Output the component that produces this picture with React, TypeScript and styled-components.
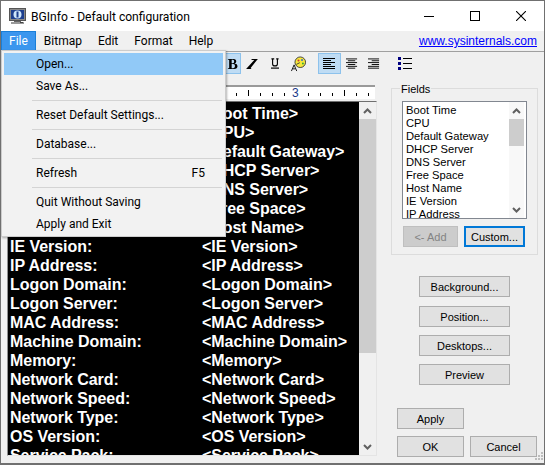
import React from "react";
import styled, { createGlobalStyle } from "styled-components";

const GlobalStyle = createGlobalStyle`
  html, body {
    margin: 0;
    padding: 0;
    background: #f0f0f0;
    overflow: hidden;
  }
`;

const Window = styled.div`
  position: relative;
  box-sizing: border-box;
  width: 545px;
  height: 465px;
  border: 1px solid #707070;
  border-bottom-width: 2px;
  background: #f0f0f0;
  display: flex;
  flex-direction: column;
  overflow: hidden;
  font-family: Roboto, "Noto Sans", sans-serif;
  color: #000;
`;

const TitleBar = styled.div`
  height: 30px;
  flex: none;
  background: #fff;
  display: flex;
  align-items: center;
  padding-left: 8px;
`;

const AppTitle = styled.span`
  margin-left: 5px;
  padding-top: 1px;
  font-size: 12.1px;
  white-space: nowrap;
`;

const WindowControls = styled.div`
  margin-left: auto;
  display: flex;
  height: 30px;
`;

const ControlButton = styled.div`
  width: 46px;
  height: 30px;
  display: flex;
  align-items: center;
  justify-content: center;
`;

const MenuBar = styled.div`
  box-sizing: border-box;
  height: 21px;
  flex: none;
  display: flex;
  align-items: stretch;
  border-bottom: 1px solid #a0a0a0;
  font-size: 12px;
`;

const MenuTitle = styled.div<{ $open?: boolean }>`
  box-sizing: border-box;
  padding: 0 7px 1px;
  display: flex;
  align-items: center;
  color: ${({ $open }) => ($open ? "#fff" : "#000")};
  background: ${({ $open }) => ($open ? "#3b96ee" : "transparent")};
  border: ${({ $open }) => ($open ? "1px solid #1a7fd8" : "1px solid transparent")};
`;

const HomeLink = styled.a`
  margin-left: auto;
  margin-right: 7px;
  align-self: center;
  font-family: "Liberation Sans", sans-serif;
  font-size: 12px;
  color: #0000ff;
  text-decoration: underline;
`;

const Toolbar = styled.div`
  height: 21px;
  margin-top: 1px;
  flex: none;
  display: flex;
  align-items: center;
  padding-left: 219px;
`;

const ToolButton = styled.div<{ $active?: boolean; $width: number; $gap?: number }>`
  box-sizing: border-box;
  width: ${({ $width }) => $width}px;
  height: 21px;
  flex: none;
  margin-left: ${({ $gap }) => $gap ?? 0}px;
  display: flex;
  align-items: center;
  justify-content: center;
  background: ${({ $active }) => ($active ? "#bfdcf4" : "transparent")};
  border: 1px solid ${({ $active }) => ($active ? "#8dc2ec" : "transparent")};
`;

const Body = styled.div`
  flex: 1;
  min-height: 0;
  display: flex;
`;

const EditorColumn = styled.div`
  width: 376px;
  flex: none;
  display: flex;
  flex-direction: column;
`;

const Ruler = styled.div`
  position: relative;
  box-sizing: border-box;
  height: 14px;
  margin: 11px 0 2px 6px;
  width: 368px;
  flex: none;
  background: #fff;
  border-top: 2px solid #9a9a9a;
`;

const RulerNumber = styled.span`
  position: absolute;
  top: -1px;
  font-family: "Liberation Sans", sans-serif;
  font-size: 12px;
  line-height: 14px;
  color: #1a3a8a;
`;

const Editor = styled.div`
  flex: 1;
  min-height: 0;
  margin: 0 0 7px 6px;
  display: flex;
  border-top: 1px solid #6f6f6f;
  border-left: 1px solid #8f8f8f;
  border-right: 1px solid #e4e4e4;
  border-bottom: 1px solid #e4e4e4;
  overflow: hidden;
`;

const EditorText = styled.div`
  flex: 1;
  min-width: 0;
  background: #000;
  color: #fff;
  padding: 2px 0 0 2px;
  font-family: "Liberation Sans", sans-serif;
  font-weight: 700;
  font-size: 16px;
  letter-spacing: -0.05px;
  line-height: 19px;
  overflow: hidden;
`;

const EditorRow = styled.div`
  display: grid;
  grid-template-columns: 192px 1fr;
  white-space: nowrap;
`;

const ScrollBar = styled.div<{ $width: number }>`
  width: ${({ $width }) => $width}px;
  flex: none;
  background: #f0f0f0;
  display: flex;
  flex-direction: column;
  align-items: stretch;
`;

const ListScrollBar = styled(ScrollBar)`
  margin-right: 2px;
  background: #f8f8f8;
`;

const ScrollArrow = styled.div`
  height: 17px;
  flex: none;
  display: flex;
  align-items: center;
  justify-content: center;
`;

const ScrollThumb = styled.div<{ $height: number }>`
  height: ${({ $height }) => $height}px;
  flex: none;
  background: #cdcdcd;
`;

const ScrollSpace = styled.div`
  flex: 1;
`;

const SidePanel = styled.div`
  flex: 1;
  min-width: 0;
  display: flex;
  flex-direction: column;
  padding: 14px 6px 0 14px;
`;

const FieldsGroup = styled.div`
  position: relative;
  box-sizing: border-box;
  height: 167px;
  width: 147px;
  flex: none;
  border: 1px solid #dcdcdc;
  padding: 12px 10px 0 10px;
`;

const GroupLabel = styled.span`
  position: absolute;
  top: -6px;
  left: 8px;
  padding: 0 1px;
  background: #f0f0f0;
  font-size: 11px;
  line-height: 13px;
  font-family: "Liberation Sans", sans-serif;
`;

const FieldList = styled.div`
  box-sizing: border-box;
  height: 118px;
  width: 125px;
  border: 1px solid #828790;
  background: #fff;
  display: flex;
`;

const FieldItems = styled.div`
  flex: 1;
  min-width: 0;
  padding: 2px 0 0 3px;
  overflow: hidden;
  font-family: "Liberation Sans", sans-serif;
  font-size: 11.2px;
  line-height: 13px;
  white-space: nowrap;
`;

const ButtonRow = styled.div<{ $top?: number; $left?: number }>`
  display: flex;
  gap: 6px;
  margin-top: ${({ $top }) => $top ?? 0}px;
  margin-left: ${({ $left }) => $left ?? 0}px;
`;

const PushButton = styled.div<{ $width: number; $disabled?: boolean; $focused?: boolean }>`
  box-sizing: border-box;
  width: ${({ $width }) => $width}px;
  height: 21px;
  flex: none;
  display: flex;
  align-items: center;
  justify-content: center;
  font-family: "Liberation Sans", sans-serif;
  font-size: 11px;
  color: ${({ $disabled }) => ($disabled ? "#838383" : "#000")};
  background: ${({ $disabled }) => ($disabled ? "#cccccc" : "#e1e1e1")};
  border: ${({ $focused }) => ($focused ? "2px solid #0078d7" : "1px solid #adadad")};
  ${({ $disabled }) => ($disabled ? "border-color: #bfbfbf;" : "")}
`;

const ButtonStack = styled.div`
  display: flex;
  flex-direction: column;
  gap: 8px;
  margin: 21px 0 0 28px;

  & > :first-child {
    margin-bottom: 1px;
  }
`;

const Dropdown = styled.div`
  position: absolute;
  left: 0;
  top: 49px;
  box-sizing: border-box;
  width: 225px;
  height: 187px;
  background: #f2f2f2;
  border: 1px solid #cccccc;
  box-shadow: 1px 1px 2px rgba(0, 0, 0, 0.3);
  padding: 2px;
  font-size: 12px;
`;

const DropdownItem = styled.div<{ $active?: boolean }>`
  height: 22px;
  display: flex;
  align-items: center;
  justify-content: space-between;
  padding: 0 18px 0 32px;
  background: ${({ $active }) => ($active ? "#91c9f7" : "transparent")};
  white-space: nowrap;
`;

const DropdownRule = styled.div`
  height: 1px;
  margin: 3px 1px 3px 28px;
  background: #d4d4d4;
`;

const ResizeGrip = styled.svg`
  position: absolute;
  right: 0;
  bottom: 0;
`;

const fields = [
  "Boot Time",
  "CPU",
  "Default Gateway",
  "DHCP Server",
  "DNS Server",
  "Free Space",
  "Host Name",
  "IE Version",
  "IP Address",
];

const rows = [
  ...fields,
  "Logon Domain",
  "Logon Server",
  "MAC Address",
  "Machine Domain",
  "Memory",
  "Network Card",
  "Network Speed",
  "Network Type",
  "OS Version",
  "Service Pack",
];

const ArrowUp = () => (
  <svg width="9" height="6" viewBox="0 0 9 6">
    <path d="M1 5 L4.5 1.5 L8 5" fill="none" stroke="#606060" strokeWidth="2" />
  </svg>
);

const ArrowDown = () => (
  <svg width="9" height="6" viewBox="0 0 9 6">
    <path d="M1 1 L4.5 4.5 L8 1" fill="none" stroke="#606060" strokeWidth="2" />
  </svg>
);

const AppIcon = () => (
  <svg width="17" height="17" viewBox="0 0 17 17">
    <rect x="0.5" y="0.5" width="16" height="12" fill="#8a8a8a" stroke="#555" />
    <rect x="2" y="2" width="13" height="9" fill="#1d3f8f" />
    <circle cx="8.5" cy="6.5" r="4" fill="#cfe6fb" />
    <rect x="7.5" y="3.5" width="2" height="6" fill="#1d3f8f" />
    <rect x="5" y="13" width="7" height="1" fill="#666" />
    <rect x="2" y="14" width="13" height="2" fill="#9a9a9a" />
    <rect x="11" y="14" width="3" height="1" fill="#444" />
  </svg>
);

const LinesIcon = ({ lines }: { lines: [number, number][] }) => (
  <svg width="13" height="12" viewBox="0 0 13 12">
    {lines.map(([x, w], i) => (
      <rect key={i} x={x} y={i * 2} width={w} height="1" fill="#000" />
    ))}
  </svg>
);

const alignLeft: [number, number][] = [[0, 12], [0, 8], [0, 12], [0, 8], [0, 12], [0, 12]];
const alignCenter: [number, number][] = [[0, 12], [2, 8], [0, 12], [2, 8], [0, 12], [2, 8]];
const alignRight: [number, number][] = [[0, 12], [4, 8], [0, 12], [4, 8], [0, 12], [0, 12]];

const RulerTicks = () => {
  const ticks = [];
  for (let i = 0; i <= 30; i++) {
    const x = 1 + i * 12;
    if (i % 8 === 0) continue;
    const half = i % 4 === 0;
    ticks.push(
      <rect key={i} x={x} y={half ? 3 : 6} width="1" height={half ? 6 : 3} fill="#000" />
    );
  }
  return (
    <svg width="368" height="12" viewBox="0 0 368 12" style={{ display: "block" }}>
      {ticks}
    </svg>
  );
};

export default function App() {
  return (
    <>
      <GlobalStyle />
      <Window>
        <TitleBar>
          <AppIcon />
          <AppTitle>BGInfo - Default configuration</AppTitle>
          <WindowControls>
            <ControlButton>
              <svg width="10" height="10" viewBox="0 0 10 10">
                <rect x="0" y="5" width="10" height="1" fill="#000" />
              </svg>
            </ControlButton>
            <ControlButton>
              <svg width="10" height="10" viewBox="0 0 10 10">
                <rect x="0.5" y="0.5" width="9" height="9" fill="none" stroke="#000" />
              </svg>
            </ControlButton>
            <ControlButton>
              <svg width="10" height="10" viewBox="0 0 10 10">
                <path d="M0 0 L10 10 M10 0 L0 10" stroke="#000" strokeWidth="1.1" />
              </svg>
            </ControlButton>
          </WindowControls>
        </TitleBar>

        <MenuBar>
          <MenuTitle $open>File</MenuTitle>
          <MenuTitle>Bitmap</MenuTitle>
          <MenuTitle>Edit</MenuTitle>
          <MenuTitle>Format</MenuTitle>
          <MenuTitle>Help</MenuTitle>
          <HomeLink>www.sysinternals.com</HomeLink>
        </MenuBar>

        <Toolbar>
          <ToolButton $active $width={21}>
            <svg width="11" height="10" viewBox="0 0 13 12" style={{ marginLeft: 4 }}>
              <path d="M1 0 H8 Q11 0 11 3 Q11 5 9 5.5 Q12.5 6 12.5 8.5 Q12.5 12 8.5 12 H1 V11 H2.5 V1 H1 Z M5.5 1 V5 H7 Q8.5 5 8.5 3 Q8.5 1 7 1 Z M5.5 6 V11 H7.5 Q9.5 11 9.5 8.5 Q9.5 6 7.5 6 Z" fill="#000" fillRule="evenodd" />
            </svg>
          </ToolButton>
          <ToolButton $width={14} $gap={4}>
            <svg width="13" height="10" viewBox="0 0 13 11">
              <path d="M6 0 H13 L12 1 L5 10 L6 11 H0 L1 10 L9 1 L6 1 Z" fill="#000" />
            </svg>
          </ToolButton>
          <ToolButton $width={10} $gap={11}>
            <svg width="10" height="13" viewBox="0 0 10 13">
              <path d="M0.5 0.7 H4 M6.5 0.7 H9.5 M2 0.7 V7 Q2 9.5 5 9.5 Q8 9.5 8 7 V0.7" fill="none" stroke="#000" strokeWidth="1.4" />
              <rect x="0" y="11.5" width="10" height="1.5" fill="#000" />
            </svg>
          </ToolButton>
          <ToolButton $width={17} $gap={10}>
            <svg width="17" height="16" viewBox="0 0 17 17">
              <circle cx="10.5" cy="6.5" r="6" fill="#f7e83c" stroke="#333" />
              <circle cx="8.5" cy="4.5" r="1.1" fill="#c33" />
              <circle cx="12.5" cy="4" r="1.1" fill="#36c" />
              <circle cx="13.5" cy="8" r="1.1" fill="#3a3" />
              <path d="M6 9 L10 7" stroke="#333" />
              <path d="M0.5 16.5 L3.5 9.5 L6.5 16.5 M2 14 H5" fill="none" stroke="#000" strokeWidth="1" />
            </svg>
          </ToolButton>
          <ToolButton $active $width={23} $gap={11}>
            <LinesIcon lines={alignLeft} />
          </ToolButton>
          <ToolButton $width={14} $gap={4}>
            <LinesIcon lines={alignCenter} />
          </ToolButton>
          <ToolButton $width={14} $gap={8}>
            <LinesIcon lines={alignRight} />
          </ToolButton>
          <ToolButton $width={16} $gap={16}>
            <svg width="14" height="13" viewBox="0 0 14 13">
              <rect x="0" y="0" width="3" height="3" fill="#000080" />
              <rect x="0" y="5" width="3" height="3" fill="#000080" />
              <rect x="0" y="10" width="3" height="3" fill="#000080" />
              <rect x="5" y="1" width="9" height="1" fill="#000" />
              <rect x="5" y="6" width="9" height="1" fill="#000" />
              <rect x="5" y="11" width="9" height="1" fill="#000" />
            </svg>
          </ToolButton>
        </Toolbar>

        <Body>
          <EditorColumn>
            <Ruler>
              <RulerTicks />
              <RulerNumber style={{ left: 285 }}>3</RulerNumber>
            </Ruler>
            <Editor>
              <EditorText>
                {rows.map((r) => (
                  <EditorRow key={r}>
                    <span>{r}:</span>
                    <span>&lt;{r}&gt;</span>
                  </EditorRow>
                ))}
              </EditorText>
              <ScrollBar $width={17}>
                <ScrollArrow>
                  <ArrowUp />
                </ScrollArrow>
                <ScrollThumb $height={234} />
                <ScrollSpace />
                <ScrollArrow>
                  <ArrowDown />
                </ScrollArrow>
              </ScrollBar>
            </Editor>
          </EditorColumn>

          <SidePanel>
            <FieldsGroup>
              <GroupLabel>Fields</GroupLabel>
              <FieldList>
                <FieldItems>
                  {fields.map((f) => (
                    <div key={f}>{f}</div>
                  ))}
                </FieldItems>
                <ListScrollBar $width={15}>
                  <ScrollArrow>
                    <ArrowUp />
                  </ScrollArrow>
                  <ScrollThumb $height={27} />
                  <ScrollSpace />
                  <ScrollArrow>
                    <ArrowDown />
                  </ScrollArrow>
                </ListScrollBar>
              </FieldList>
              <ButtonRow $top={7} $left={1}>
                <PushButton $width={55} $disabled>
                  &lt;- Add
                </PushButton>
                <PushButton $width={61} $focused>
                  Custom...
                </PushButton>
              </ButtonRow>
            </FieldsGroup>
            <ButtonStack>
              <PushButton $width={91}>Background...</PushButton>
              <PushButton $width={91}>Position...</PushButton>
              <PushButton $width={91}>Desktops...</PushButton>
              <PushButton $width={91}>Preview</PushButton>
            </ButtonStack>
            <ButtonRow $top={23} $left={6}>
              <PushButton $width={67}>Apply</PushButton>
            </ButtonRow>
            <ButtonRow $top={7} $left={6}>
              <PushButton $width={67}>OK</PushButton>
              <PushButton $width={67}>Cancel</PushButton>
            </ButtonRow>
          </SidePanel>
        </Body>

        <Dropdown>
          <DropdownItem $active>Open...</DropdownItem>
          <DropdownItem>Save As...</DropdownItem>
          <DropdownRule />
          <DropdownItem>Reset Default Settings...</DropdownItem>
          <DropdownRule />
          <DropdownItem>Database...</DropdownItem>
          <DropdownRule />
          <DropdownItem>
            <span>Refresh</span>
            <span>F5</span>
          </DropdownItem>
          <DropdownRule />
          <DropdownItem>Quit Without Saving</DropdownItem>
          <DropdownItem>Apply and Exit</DropdownItem>
        </Dropdown>

        <ResizeGrip width="12" height="12" viewBox="0 0 12 12">
          {[[9, 1], [6, 4], [9, 4], [3, 7], [6, 7], [9, 7]].map(([x, y]) => (
            <rect key={`${x}-${y}`} x={x} y={y} width="2" height="2" fill="#bdbdbd" />
          ))}
        </ResizeGrip>
      </Window>
    </>
  );
}
